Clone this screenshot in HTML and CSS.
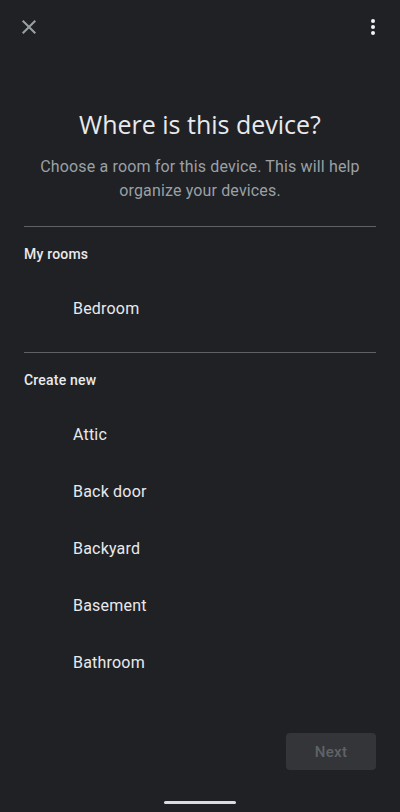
FILE: index.html
```html
<!DOCTYPE html>
<html lang="en">
<head>
  <meta charset="UTF-8" />
  <meta name="viewport" content="width=device-width, initial-scale=1.0"/>
  <title>Where is this device?</title>
  <link rel="stylesheet" href="styles.css">
</head>
<body>
  <header class="topbar">
    <svg class="icon close" viewBox="0 0 24 24" width="24" height="24">
      <path d="M19 6.41L17.59 5 12 10.59 6.41 5 5 6.41 10.59 12 5 17.59 6.41 19 12 13.41 17.59 19 19 17.59 13.41 12z"/>
    </svg>
    <svg class="icon more" viewBox="0 0 24 24" width="24" height="24">
      <circle cx="12" cy="6" r="2"/>
      <circle cx="12" cy="12" r="2"/>
      <circle cx="12" cy="18" r="2"/>
    </svg>
  </header>

  <main class="content">
    <h1 class="title">Where is this device?</h1>
    <p class="subtitle">Choose a room for this device. This will help organize your devices.</p>

    <section class="group">
      <h2 class="group-title">My rooms</h2>
      <ul class="rooms">
        <li>Bedroom</li>
      </ul>
    </section>

    <section class="group">
      <h2 class="group-title">Create new</h2>
      <ul class="rooms">
        <li>Attic</li>
        <li>Back door</li>
        <li>Backyard</li>
        <li>Basement</li>
        <li>Bathroom</li>
      </ul>
    </section>
  </main>

  <footer class="footer">
    <div class="actions">
      <button class="btn-next" disabled>Next</button>
    </div>
    <div class="home-bar"></div>
  </footer>
</body>
</html>
```

FILE: styles.css
```css
* {
  margin: 0;
  padding: 0;
  box-sizing: border-box;
}

html, body {
  height: 100%;
}

body {
  display: flex;
  flex-direction: column;
  background: #202124;
  color: #e8eaed;
  font-family: Roboto, "Noto Sans", sans-serif;
  overflow: hidden;
}

.topbar {
  height: 54px;
  display: flex;
  justify-content: space-between;
  align-items: center;
  padding: 0 15px 0 17px;
}

.icon.close {
  fill: #9aa0a6;
}

.icon.more {
  fill: #f1f3f4;
}

.content {
  flex: 1;
}

.title {
  margin-top: 54px;
  font-family: "Open Sans", Roboto, sans-serif;
  font-size: 25px;
  line-height: 32px;
  font-weight: 400;
  text-align: center;
  color: #e8eaed;
}

.subtitle {
  margin: 15px 20px 0;
  font-size: 16px;
  line-height: 24px;
  letter-spacing: 0.15px;
  text-align: center;
  color: #9aa0a6;
}

.group {
  margin: 23px 24px 0;
  border-top: 1px solid #5f6368;
  padding-bottom: 15px;
}

.group + .group {
  margin-top: 0;
}

.group-title {
  padding: 17px 0 16px;
  font-size: 14px;
  line-height: 20px;
  font-weight: 500;
  letter-spacing: 0.2px;
  color: #e8eaed;
}

.rooms {
  list-style: none;
}

.rooms li {
  height: 57px;
  line-height: 57px;
  padding-left: 49px;
  font-size: 16px;
  letter-spacing: 0.2px;
  color: #e8eaed;
}

.footer {
  display: flex;
  flex-direction: column;
  align-items: center;
}

.actions {
  align-self: stretch;
  display: flex;
  justify-content: flex-end;
  padding: 0 24px;
}

.btn-next {
  width: 90px;
  height: 37px;
  border: none;
  border-radius: 4px;
  background: #343538;
  color: #5f6368;
  font-family: Roboto, sans-serif;
  font-size: 15px;
  font-weight: 500;
  letter-spacing: 0.3px;
}

.home-bar {
  width: 72px;
  height: 3px;
  margin: 31px 0 8px;
  border-radius: 2px;
  background: #dadce0;
}
```
